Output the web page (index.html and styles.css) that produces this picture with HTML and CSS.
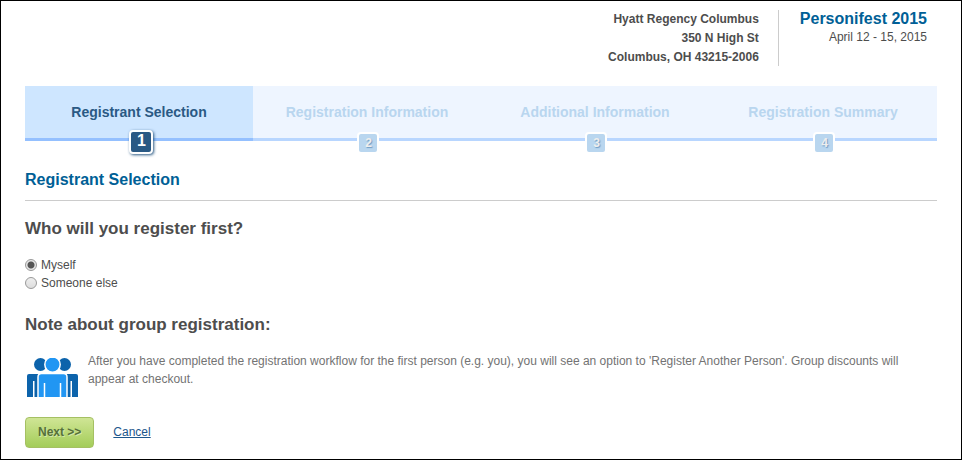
FILE: index.html
```html
<!DOCTYPE html>
<html lang="en">
<head>
    <meta charset="UTF-8">
    <meta name="viewport" content="width=device-width, initial-scale=1.0">
    <title>Personifest 2015 - Registrant Selection</title>
    <link rel="stylesheet" href="styles.css">
</head>
<body>
    <div class="page">
        <header class="event-header">
            <address class="venue">
                Hyatt Regency Columbus<br>
                350 N High St<br>
                Columbus, OH 43215-2006
            </address>
            <div class="event">
                <h1>Personifest 2015</h1>
                <p>April 12 - 15, 2015</p>
            </div>
        </header>

        <ol class="steps">
            <li class="step active">Registrant Selection <span class="step-number">1</span></li>
            <li class="step">Registration Information <span class="step-number">2</span></li>
            <li class="step">Additional Information <span class="step-number">3</span></li>
            <li class="step">Registration Summary <span class="step-number">4</span></li>
        </ol>

        <main>
            <h2 class="page-title">Registrant Selection</h2>

            <form>
                <h3 id="whoLabel">Who will you register first?</h3>
                <div class="options" role="radiogroup" aria-labelledby="whoLabel">
                    <div class="option">
                        <input type="radio" name="registrant" id="myself" checked>
                        <label for="myself">Myself</label>
                    </div>
                    <div class="option">
                        <input type="radio" name="registrant" id="someoneElse">
                        <label for="someoneElse">Someone else</label>
                    </div>
                </div>

                <h3>Note about group registration:</h3>
                <div class="note">
                    <svg class="group-icon" width="51" height="39" viewBox="0 0 51 39" aria-hidden="true">
                        <g fill="#0c63ab">
                            <circle cx="13.500" cy="6.500" r="6.500"/>
                            <circle cx="37.500" cy="6.500" r="6.500"/>
                            <path d="M0 39V18q0-2 2-2h11v23H7.500V23H6v16z"/>
                            <path d="M51 39V18q0-2-2-2H38v23h5.500V23H45v16z"/>
                        </g>
                        <g fill="#2196f3" stroke="#fff" stroke-width="1.500">
                            <circle cx="25.500" cy="6.500" r="7.700"/>
                            <path d="M11 41V19q0-3.500 3.500-3.500h22q3.500 0 3.500 3.500v22z"/>
                        </g>
                        <path d="M17.500 39V25M33.500 39V25" stroke="#fff" stroke-width="1.500"/>
                    </svg>
                    <p>After you have completed the registration workflow for the first person (e.g. you), you will see an option to 'Register Another Person'. Group discounts will appear at checkout.</p>
                </div>

                <div class="actions">
                    <button type="submit" class="next-btn">Next &gt;&gt;</button>
                    <a href="#" class="cancel-link">Cancel</a>
                </div>
            </form>
        </main>
    </div>
</body>
</html>
```

FILE: styles.css
```css
* {
    margin: 0;
    padding: 0;
    box-sizing: border-box;
}

body {
    background-color: white;
    color: #4d4d4d;
    font-family: Arial, "Liberation Sans", sans-serif;
    font-size: 12px;
    line-height: 18px;
}

.page {
    min-height: 100vh;
    padding: 9px 24px 11px;
    border: 1px solid #000;
}

.event-header {
    display: flex;
    justify-content: flex-end;
    margin-bottom: 19px;
    padding-right: 10px;
    line-height: 19px;
    text-align: right;
}

.venue {
    padding-right: 19px;
    font-style: normal;
    font-weight: bold;
}

.event {
    height: 56px;
    padding-left: 21px;
    border-left: 1px solid #ccc;
}

.event h1 {
    color: #005f96;
    font-size: 16px;
    line-height: 18px;
}

/* Progress steps */
.steps {
    display: flex;
    list-style: none;
}

.step {
    position: relative;
    flex: 1;
    padding: 17px 0;
    border-bottom: 3px solid #b8d6ff;
    background-color: #eef5ff;
    color: #b9d6ef;
    font-size: 14px;
    font-weight: bold;
    text-align: center;
}

.step.active {
    border-bottom-color: #94c0ff;
    background-color: #cee6ff;
    color: #2a5984;
}

.step-number {
    position: absolute;
    left: calc(50% - 10px);
    bottom: -16px;
    width: 22px;
    height: 22px;
    padding-left: 1px;
    border: 2px solid white;
    border-radius: 4px;
    background-color: #b9d6ef;
    color: #eee;
    font-size: 12px;
    text-shadow: 1px 1px 1px #6f9cc4;
}

.step.active .step-number {
    width: 24px;
    height: 24px;
    background-color: #2a5984;
    box-shadow: 1px 1px 3px #2a5984;
    color: white;
    font-size: 16px;
    text-shadow: none;
}

.page-title {
    margin-bottom: 18px;
    padding: 29px 0 10px;
    border-bottom: 1px solid #ccc;
    color: #005f96;
    font-size: 16px;
    line-height: 20px;
}

h3 {
    margin-bottom: 17px;
    font-size: 17px;
    line-height: 20px;
}

.options {
    margin-bottom: 23px;
}

.option {
    display: flex;
    align-items: center;
    gap: 4px;
}

.option input {
    appearance: none;
    width: 12px;
    height: 12px;
    border: 1px solid #999;
    border-radius: 50%;
    background: linear-gradient(#eee, #ddd);
}

.option input:checked {
    background: radial-gradient(circle, #555 3px, #e6e6e6 4px);
}

.note {
    display: flex;
    gap: 10px;
    margin-bottom: 20px;
    padding: 0 30px 0 2px;
    color: #737373;
}

.group-icon {
    flex-shrink: 0;
    margin-top: 6px;
}

.actions {
    display: flex;
    align-items: baseline;
    gap: 19px;
}

.next-btn {
    padding: 6px 12px;
    border: 1px solid #a5c063;
    border-radius: 4px;
    background: linear-gradient(#cfe595, #a4cd59);
    color: #55703a;
    font-family: inherit;
    font-size: 12px;
    font-weight: bold;
    line-height: 17px;
    text-shadow: 1px 1px 0 #d4e8a9;
    cursor: pointer;
}

.cancel-link {
    color: #1c568c;
}
```
